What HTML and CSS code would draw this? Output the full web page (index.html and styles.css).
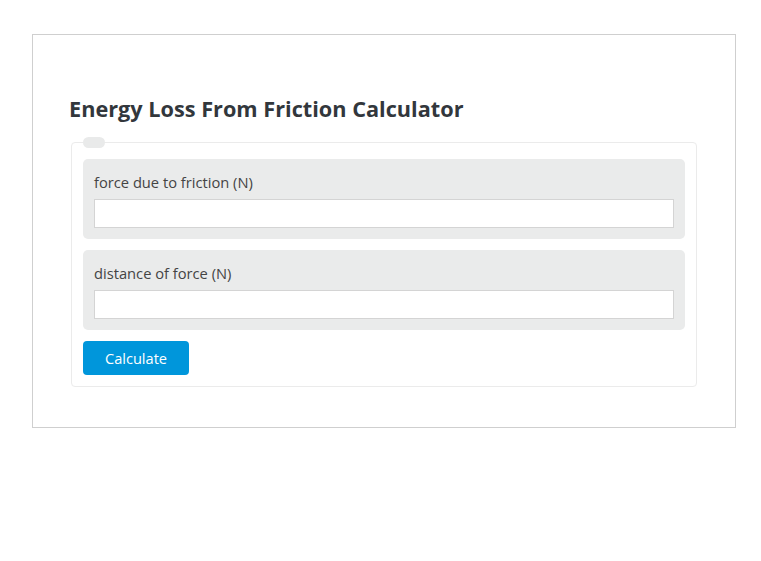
FILE: index.html
```html
<!DOCTYPE html>
<html lang="en">
  <head>
    <meta charset="UTF-8" />
    <meta name="viewport" content="width=device-width, initial-scale=1.0" />
    <title>Energy Loss From Friction Calculator</title>
    <link rel="stylesheet" href="styles.css">
  </head>
  <body>
    <div class="page">
      <div class="calculator">
        <h2 class="title">Energy Loss From Friction Calculator</h2>
        <form class="card">
          <span class="legend"></span>
          <div class="field">
            <label for="force">force due to friction (N)</label>
            <input type="text" id="force" />
          </div>
          <div class="field">
            <label for="distance">distance of force (N)</label>
            <input type="text" id="distance" />
          </div>
          <div class="actions">
            <button type="button" class="btn">Calculate</button>
          </div>
        </form>
      </div>
    </div>
  </body>
</html>
```

FILE: styles.css
```css
body {
  margin: 0;
  background: #fff;
  font-family: "Open Sans", "Noto Sans", sans-serif;
  color: #333;
}

.page {
  padding: 34px 25px 0 32px;
}

.calculator {
  box-sizing: border-box;
  width: 704px;
  height: 394px;
  border: 1px solid #cfcfcf;
  padding: 59px 36px 0;
}

.title {
  margin: 0 0 18px 0;
  font-size: 21.7px;
  line-height: 30px;
  font-weight: 700;
  color: #32373c;
}

.card {
  position: relative;
  margin: 0 2px;
  border: 1px solid #ebebeb;
  border-radius: 4px;
  padding: 16px 11px 11px;
  display: flex;
  flex-direction: column;
  gap: 11px;
}

.legend {
  position: absolute;
  top: -6px;
  left: 11px;
  width: 22px;
  height: 11px;
  border-radius: 6px;
  background: #e9eaea;
}

.field {
  background: #eaebeb;
  border-radius: 5px;
  padding: 10px 11px 11px;
  display: flex;
  flex-direction: column;
}

.field label {
  font-size: 14.7px;
  line-height: 20px;
  color: #444;
  margin: 3px 0 7px;
}

.field input {
  height: 29px;
  box-sizing: border-box;
  border: 1px solid #d4d4d4;
  background: #fff;
  margin: 0;
  padding: 0 8px;
  font: inherit;
}

.actions {
  display: flex;
}

.btn {
  width: 106px;
  height: 34px;
  border: 0;
  border-radius: 4px;
  background: #0096db;
  color: #fff;
  font-family: inherit;
  font-size: 14.6px;
  padding: 0;
}
```
